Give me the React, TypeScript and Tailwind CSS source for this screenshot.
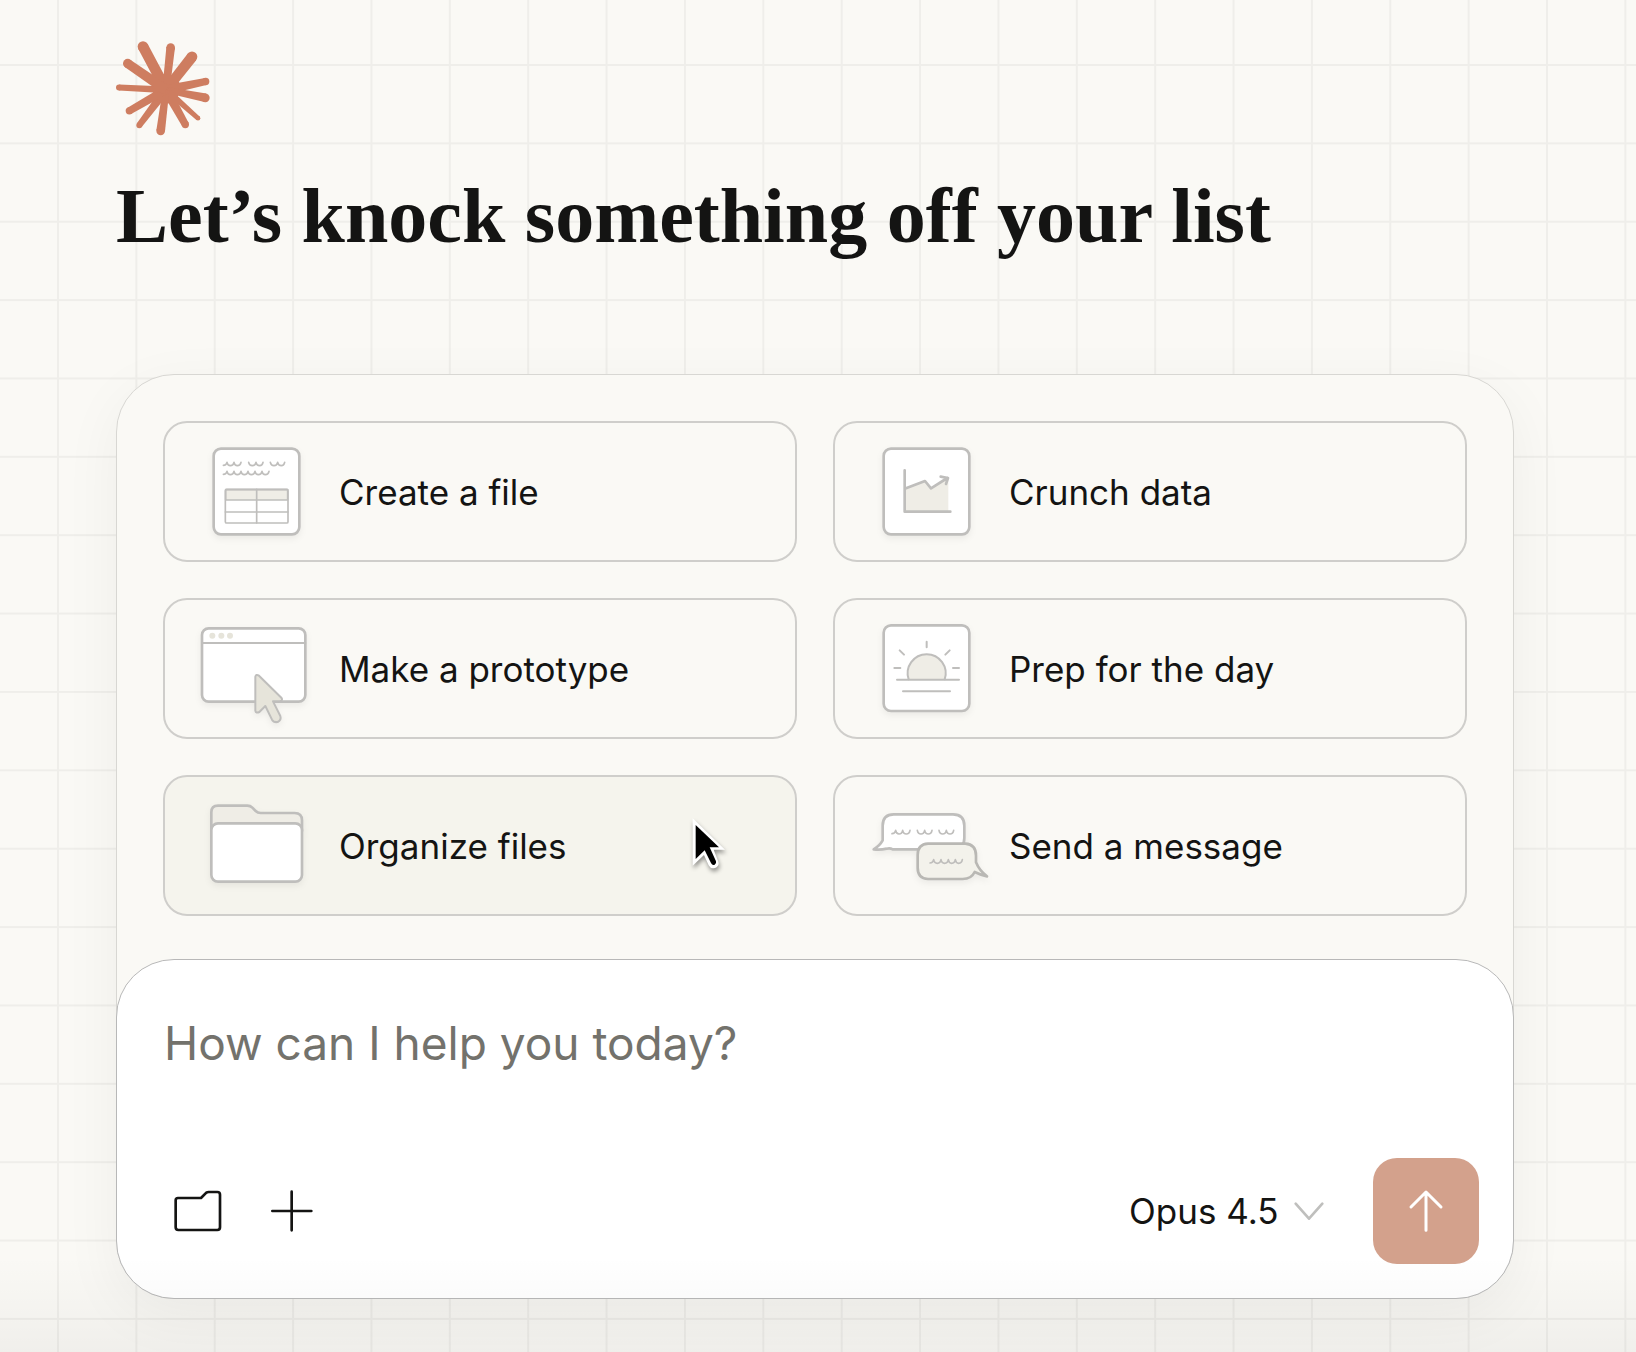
import React, { useState } from 'react';

const LINE = '#bfbebc';
const FILL = '#efede6';

// tip x, tip y, tip radius, half width where the ray meets the core
const rays = [
  [128, 49, 16, 16],
  [211, 52, 13, 11],
  [275, 80, 16, 15],
  [316, 154, 11, 14],
  [315, 203, 13, 9],
  [293, 264, 7, 10],
  [255, 283, 11, 14],
  [181, 302, 13, 10],
  [117, 285, 9, 13],
  [87, 242, 11, 13],
  [56, 172, 9, 10],
  [82, 100, 14, 15],
];

const Burst = () => {
  const cx = 197;
  const cy = 179;

  return (
    <svg className="h-[95px] w-[94px]" viewBox="47 33 282 284" fill="#ce7d60" aria-hidden="true">
      <path d="M161 150 190 132 226 144 242 164 236 188 230 206 208 220 190 218 164 206 158 186Z" />
      {rays.map(([x, y, r, w]) => {
        const len = Math.hypot(x - cx, y - cy);
        const nx = -(y - cy) / len;
        const ny = (x - cx) / len;
        return (
          <g key={`${x}-${y}`}>
            <circle cx={x} cy={y} r={r} />
            <path
              d={`M${x + nx * r} ${y + ny * r}L${cx + nx * w} ${cy + ny * w}L${cx - nx * w} ${cy - ny * w}L${x - nx * r} ${y - ny * r}Z`}
            />
          </g>
        );
      })}
    </svg>
  );
};

interface ArtProps {
  viewBox: string;
  children: React.ReactNode;
}

const Art: React.FC<ArtProps> = ({ viewBox, children }) => (
  <svg
    className="h-[137px] w-[140px] shrink-0 drop-shadow-[0_3px_3px_rgba(0,0,0,0.06)]"
    viewBox={viewBox}
    fill="none"
    stroke={LINE}
    strokeWidth="8"
    strokeLinecap="round"
    strokeLinejoin="round"
    aria-hidden="true"
  >
    {children}
  </svg>
);

const FileArt = () => (
  <Art viewBox="0 -20 420 411">
    <rect x="71" y="57" width="257" height="257" rx="22" fill="#fff" />
    <g strokeWidth="5">
      <path d="M100 107Q109 107 111 98Q113 108 121 108Q130 108 132 98Q134 108 142 108Q151 108 153 98M176 98Q178 108 187 108Q196 108 198 98Q200 108 209 108Q217 108 219 98M241 98Q243 108 252 108Q261 108 263 98Q265 108 274 108Q282 108 284 98" />
      <path d="M100 134Q109 134 111 125Q113 135 121 135Q130 135 132 125Q134 135 142 135Q151 135 153 125Q155 135 163 135Q172 135 174 125Q176 135 184 135Q193 135 195 125Q197 135 205 135Q214 135 216 125Q218 135 226 135Q235 135 237 125" />
      <path d="M107 180H293V211H107Z" fill={FILL} />
      <rect x="106" y="179" width="188" height="101" rx="4" />
      <path d="M106 247H294M200 179V280" />
    </g>
  </Art>
);

const ChartArt = () => (
  <Art viewBox="0 -20 420 411">
    <rect x="71" y="57" width="257" height="257" rx="22" fill="#fff" />
    <path d="M134 177 195 154 213 176 265 145V246H134Z" fill={FILL} stroke="none" />
    <path d="M134 122V246H271M134 177 195 154 213 176 262 145M242 141 264 145 258 163" />
  </Art>
);

const WindowArt = () => (
  <Art viewBox="0 -30 420 411">
    <rect x="36" y="55" width="310" height="220" rx="20" fill="#fff" />
    <path d="M36 99H346" strokeWidth="6" />
    <g fill="#e6e4da" stroke="none">
      <circle cx="67" cy="77" r="9" />
      <circle cx="94" cy="77" r="9" />
      <circle cx="120" cy="77" r="9" />
    </g>
    <path
      d="M196 200Q198 192 207 197L274 263Q280 272 270 273L249 274 271 318Q275 330 263 336Q251 338 246 329L226 288 208 306Q198 311 196 302Z"
      fill="#e6e4da"
      strokeWidth="6"
    />
  </Art>
);

const SunArt = () => (
  <Art viewBox="0 -30 420 411">
    <rect x="71" y="46" width="257" height="257" rx="22" fill="#fff" />
    <g strokeWidth="6">
      <path d="M146 208A57 57 0 1 1 254 208" fill={FILL} />
      <path d="M111 209H297M129 244H270M103 174H121M279 174H297M200 95V112M119 121 132 134M269 121 256 134" />
    </g>
  </Art>
);

const FolderArt = () => (
  <Art viewBox="0 -12 420 411">
    <path
      d="M64 150V94Q64 74 84 74H172Q181 74 187 80L197 90Q203 96 212 96H314Q336 96 336 118V150Z"
      fill={FILL}
    />
    <rect x="64" y="127" width="272" height="175" rx="20" fill="#fff" />
  </Art>
);

const MessageArt = () => (
  <Art viewBox="0 -42 420 411">
    <path
      d="M101 70H279Q313 70 313 104V141Q313 175 279 175H98Q90 170 80 173Q60 178 41 175Q60 163 68 148V104Q68 70 101 70Z"
      fill="#fff"
    />
    <path
      d="M96 128Q105 128 107 118Q109 129 117 129Q126 129 128 118Q130 129 139 129Q148 129 150 118M172 118Q174 129 183 129Q192 129 194 118Q196 129 205 129Q214 129 216 118M237 118Q239 129 248 129Q257 129 259 118Q261 129 270 129Q279 129 281 118"
      strokeWidth="5"
    />
    <path
      d="M204 158H316Q348 160 348 194V214Q358 239 381 256Q362 252 344 243Q334 264 308 264H204Q173 262 173 230V192Q173 160 204 158Z"
      fill="#f3f2eb"
      stroke="#b9b8b4"
    />
    <path
      d="M210 216Q219 216 221 206Q223 217 232 217Q241 217 243 206Q245 217 254 217Q263 217 265 206Q267 217 275 217Q284 217 286 206Q288 217 296 217Q305 217 307 206"
      strokeWidth="5"
    />
  </Art>
);

const Cursor = () => (
  <svg
    className="pointer-events-none absolute top-10 left-[526px] h-14 w-10 drop-shadow-[1px_3px_2px_rgba(0,0,0,0.4)]"
    viewBox="92 166 120 168"
    aria-hidden="true"
  >
    <path
      d="M97 170V312L131 280 145 311Q151 323 164 319Q178 313 174 300L160 264H194Z"
      fill="#fff"
    />
    <path d="M106 190V292L133 266 152 304Q156 312 163 309Q169 305 167 299L148 257H176Z" fill="#000" />
  </svg>
);

const tasks = [
  { label: 'Create a file', Icon: FileArt },
  { label: 'Crunch data', Icon: ChartArt },
  { label: 'Make a prototype', Icon: WindowArt },
  { label: 'Prep for the day', Icon: SunArt },
  { label: 'Organize files', Icon: FolderArt, active: true },
  { label: 'Send a message', Icon: MessageArt },
];

const GridBackdrop = () => (
  <svg className="absolute inset-0 h-full w-full" aria-hidden="true">
    <defs>
      <pattern id="grid" x="57" y="64" width="78.37" height="78.37" patternUnits="userSpaceOnUse">
        <path d="M0 1H78.37M1 0V78.37" stroke="#efeeea" strokeWidth="2" />
      </pattern>
    </defs>
    <rect width="100%" height="100%" fill="url(#grid)" />
  </svg>
);

export default function App() {
  const [message, setMessage] = useState('');
  const [model, setModel] = useState('Opus 4.5');

  return (
    <div className="relative min-h-screen overflow-hidden bg-[#faf9f5] font-['Inter',sans-serif] text-[#141413]">
      <GridBackdrop />

      <main className="relative pt-[41px] pr-[122px] pb-[53px] pl-[116px]">
        <Burst />

        <h1 className="mt-8 font-['Liberation_Serif',serif] text-[78px] leading-[96px] font-bold whitespace-nowrap">
          Let’s knock something off your list
        </h1>

        <section className="mt-[110px] rounded-[58px] border border-[#d8d7d3] bg-[#faf9f5] shadow-[0_16px_60px_rgba(0,0,0,0.05)]">
          {/* Suggested tasks */}
          <div className="grid grid-cols-2 gap-9 px-[46px] pt-[46px] pb-[43px]">
            {tasks.map(({ label, Icon, active }) => (
              <button
                key={label}
                type="button"
                className={`relative flex items-center gap-[9px] rounded-3xl border-2 border-[#cfcecb] pl-[25px] text-left text-[35px] leading-[44px] ${active ? 'bg-[#f5f4ed]' : 'bg-transparent'}`}
              >
                <Icon />
                <span className="whitespace-nowrap">{label}</span>
                {active && <Cursor />}
              </button>
            ))}
          </div>

          {/* Composer */}
          <form
            className="-mx-px -mb-px flex flex-col rounded-[58px] border border-[#b8b8b8] bg-white pt-[53px] pr-[34px] pb-[34px] pl-[47px]"
            onSubmit={(e) => e.preventDefault()}
          >
            <textarea
              aria-label="Message"
              rows={1}
              value={message}
              onChange={(e) => setMessage(e.target.value)}
              placeholder="How can I help you today?"
              className="h-[145px] w-full resize-none bg-transparent text-[46px] leading-[60px] outline-none placeholder:text-[#73726c]"
            />
            <div className="flex items-center">
              <button type="button" aria-label="Choose folder" className="ml-2">
                <svg className="h-[48px] w-[52px]" viewBox="66 142 156 144" fill="none" stroke="currentColor" strokeWidth="8" strokeLinejoin="round">
                  <path d="M84 175H153L169 159Q172 157 176 157H202Q210 157 210 165V263Q210 271 202 271H85Q77 271 77 263V182Q77 175 84 175Z" />
                </svg>
              </button>
              <button type="button" aria-label="Add" className="ml-[44px]">
                <svg className="h-[48px] w-[48px]" viewBox="354 142 144 144" fill="none" stroke="currentColor" strokeWidth="8" strokeLinecap="round">
                  <path d="M367 214H484M425 156V272" />
                </svg>
              </button>

              <div className="relative ml-auto">
                <select
                  aria-label="Model"
                  value={model}
                  onChange={(e) => setModel(e.target.value)}
                  className="appearance-none bg-transparent pr-[46px] text-[35px] leading-[44px] outline-none"
                >
                  <option>Opus 4.5</option>
                </select>
                <svg
                  className="pointer-events-none absolute top-3 right-0 h-[20px] w-[32px]"
                  viewBox="579 184 96 60"
                  fill="none"
                  stroke="#bfbfbd"
                  strokeWidth="8"
                  strokeLinecap="round"
                  strokeLinejoin="round"
                  aria-hidden="true"
                >
                  <path d="M587 192 627 237 667 192" />
                </svg>
              </div>

              <button
                type="submit"
                aria-label="Send"
                className="ml-12 flex size-[106px] items-center justify-center rounded-3xl bg-[#d3a18c] text-white"
              >
                <svg className="size-12" viewBox="907 142 144 144" fill="none" stroke="currentColor" strokeWidth="9" strokeLinecap="round" strokeLinejoin="round">
                  <path d="M979 157V272M934 202 979 157 1024 202" />
                </svg>
              </button>
            </div>
          </form>
        </section>
      </main>

      {/* Fade at the foot of the page */}
      <div className="pointer-events-none absolute inset-x-0 bottom-0 h-24 bg-linear-to-b from-transparent to-black/4" />
    </div>
  );
}
